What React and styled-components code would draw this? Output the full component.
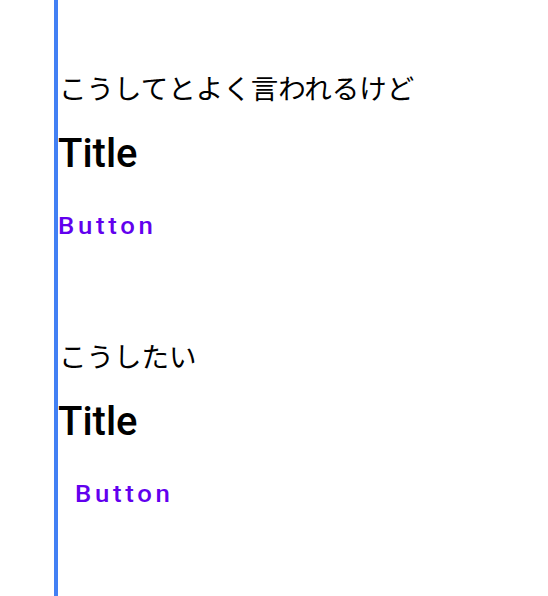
import React from 'react'
import styled, { createGlobalStyle } from 'styled-components'

const GlobalStyle = createGlobalStyle`
  html, body {
    margin: 0;
    padding: 0;
    background: #ffffff;
  }
  body {
    font-family: Roboto, "Noto Sans CJK JP", sans-serif;
  }
`

const Page = styled.div`
  padding-left: 54px;
  height: 596px;
  overflow: hidden;
`

const Panel = styled.div`
  border-left: 4px solid #4280f4;
  height: 100%;
  padding-top: 65px;
  display: flex;
  flex-direction: column;
  gap: 86px;
  box-sizing: border-box;
`

const Section = styled.section`
  display: flex;
  flex-direction: column;
  align-items: flex-start;
`

const Caption = styled.p`
  margin: 0 0 0 1px;
  font-family: "Noto Sans CJK JP", sans-serif;
  font-size: 27.5px;
  line-height: 44px;
  color: #000;
`

const Title = styled.h1`
  margin: 21px 0 0 0;
  font-family: Roboto, sans-serif;
  font-weight: 500;
  font-size: 40px;
  line-height: 48px;
  color: #000;
`

const TextButton = styled.button`
  margin-top: 29px;
  border: none;
  background: transparent;
  padding: 0 ${(p) => (p.$padded ? '17px' : '0')};
  font-family: Roboto, sans-serif;
  font-weight: 500;
  font-size: 23px;
  line-height: 40px;
  color: #6200ee;
  cursor: pointer;
`

const Label = styled.span`
  display: inline-block;
  letter-spacing: 3.3px;
  transform: scaleX(1.12);
  transform-origin: left center;
`

const Example = ({ caption, padded }) => {
  return (
    <Section>
      <Caption>{caption}</Caption>
      <Title>Title</Title>
      <TextButton $padded={padded}>
        <Label>Button</Label>
      </TextButton>
    </Section>
  )
}

const App = () => {
  return (
    <Page>
      <GlobalStyle />
      <Panel>
        <Example caption='こうしてとよく言われるけど' />
        <Example caption='こうしたい' padded />
      </Panel>
    </Page>
  )
}

export default App
